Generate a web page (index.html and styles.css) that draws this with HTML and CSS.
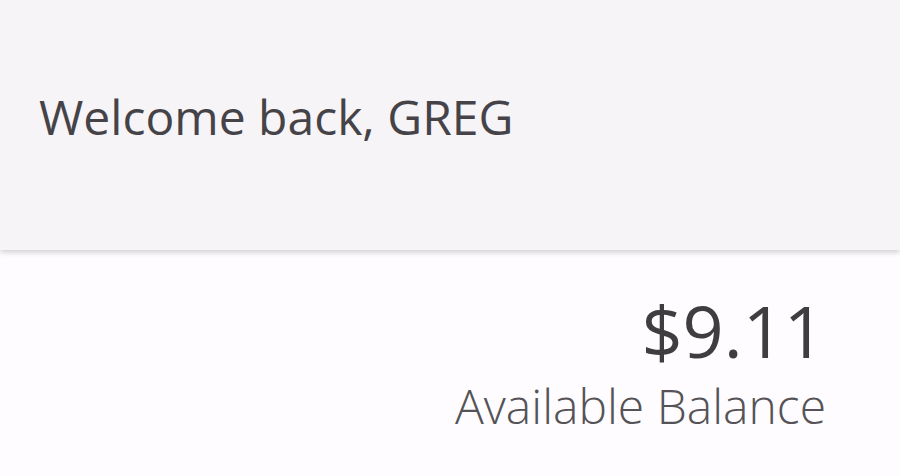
FILE: index.html
```html
<!DOCTYPE html>
<html>
<head>
<meta charset="utf-8">
<link rel="stylesheet" href="styles.css">
</head>
<body>
<header class="header">
  <h1 class="welcome">Welcome back, GREG</h1>
</header>
<main class="balance">
  <div class="balance-box">
    <div class="amount">$9.11</div>
    <div class="label">Available Balance</div>
  </div>
</main>
</body>
</html>
```
FILE: styles.css
```css
html, body {
  margin: 0;
  padding: 0;
  background: #fefcfe;
  height: 100%;
  overflow: hidden;
}
body {
  font-family: "Open Sans", "Noto Sans", sans-serif;
}
.header {
  height: 250px;
  background: #f6f4f7;
  box-shadow: 0 2px 6px rgba(0, 0, 0, 0.2);
  display: flex;
  align-items: center;
  padding-left: 39px;
  padding-bottom: 18px;
  box-sizing: border-box;
  position: relative;
}
.welcome {
  margin: 0;
  font-size: 48px;
  font-weight: 400;
  color: #454347;
}
.balance {
  display: flex;
  justify-content: flex-end;
  padding-top: 45px;
  padding-right: 75px;
}
.balance-box {
  display: flex;
  flex-direction: column;
  align-items: flex-end;
}
.amount {
  font-size: 72px;
  font-weight: 400;
  color: #3f3d40;
  line-height: 70px;
}
.label {
  margin-top: 13px;
  margin-right: -1px;
  font-size: 48px;
  font-weight: 300;
  color: #555357;
  line-height: 56px;
}
```
